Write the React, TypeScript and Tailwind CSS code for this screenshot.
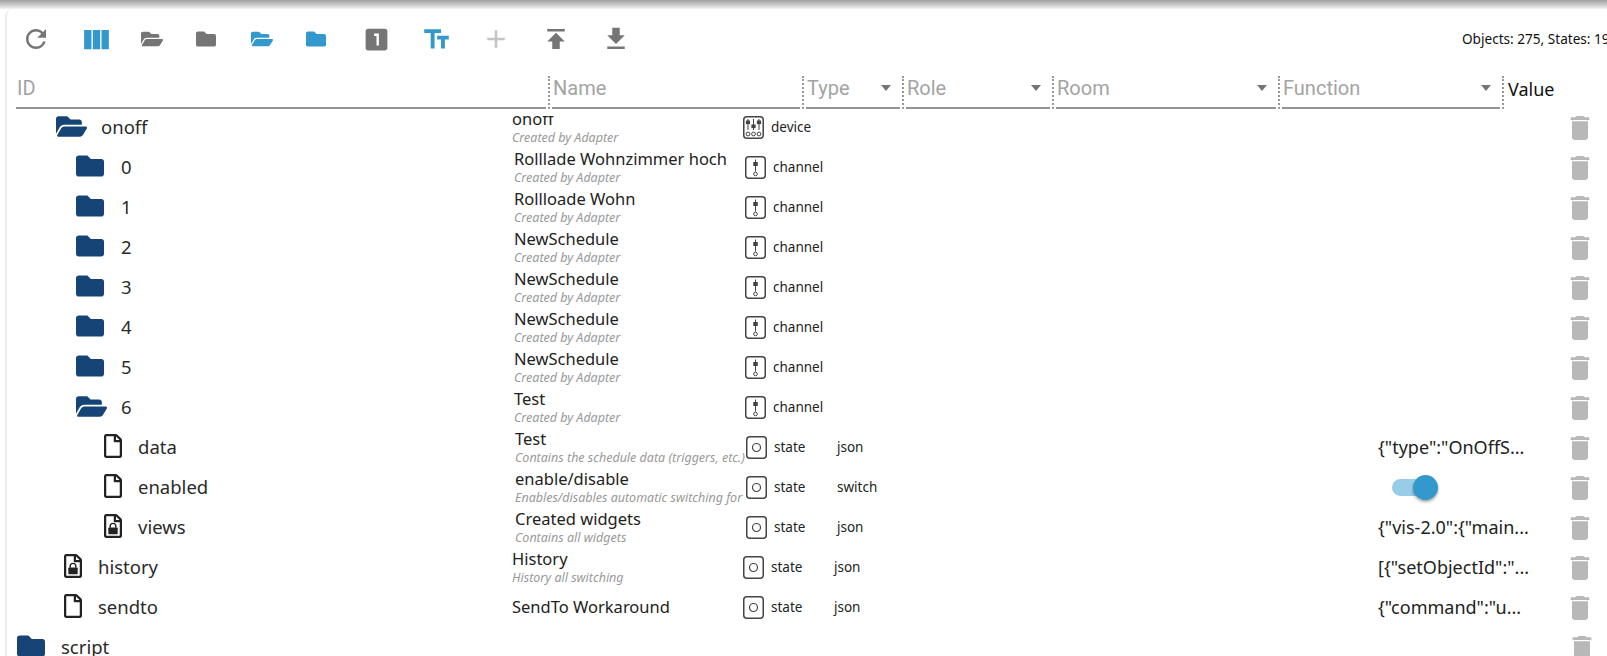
import { FaFolder, FaFolderOpen, FaRegFile } from "react-icons/fa";
import {
  MdAdd,
  MdDelete,
  MdFileDownload,
  MdLooksOne,
  MdPublish,
  MdRefresh,
  MdTextFields,
  MdViewColumn,
} from "react-icons/md";

type Row = {
  id: string;
  icon: "open" | "closed" | "file" | "locked";
  indent: string;
  idWidth: string;
  gap: string;
  name?: string;
  desc?: string;
  type?: "device" | "channel" | "state";
  role?: string;
  value?: string | boolean;
};

const folderRow = { indent: "pl-[77px]", idWidth: "w-[515px]", gap: "ml-[17px]" };
const fileRow = { indent: "pl-[105px]", idWidth: "w-[516px]", gap: "ml-[16px]" };
const topFile = { indent: "pl-[65px]", idWidth: "w-[513px]", gap: "ml-[16px]" };
const by = "Created by Adapter";

const rows: Row[] = [
  { id: "onoff", icon: "open", indent: "pl-[57px]", idWidth: "w-[513px]", gap: "ml-[14px]", name: "onoff", desc: by, type: "device" },
  { id: "0", icon: "closed", ...folderRow, name: "Rolllade Wohnzimmer hoch", desc: by, type: "channel" },
  { id: "1", icon: "closed", ...folderRow, name: "Rollloade Wohn", desc: by, type: "channel" },
  { id: "2", icon: "closed", ...folderRow, name: "NewSchedule", desc: by, type: "channel" },
  { id: "3", icon: "closed", ...folderRow, name: "NewSchedule", desc: by, type: "channel" },
  { id: "4", icon: "closed", ...folderRow, name: "NewSchedule", desc: by, type: "channel" },
  { id: "5", icon: "closed", ...folderRow, name: "NewSchedule", desc: by, type: "channel" },
  { id: "6", icon: "open", ...folderRow, gap: "ml-[14px]", name: "Test", desc: by, type: "channel" },
  { id: "data", icon: "file", ...fileRow, name: "Test", desc: "Contains the schedule data (triggers, etc.)", type: "state", role: "json", value: '{"type":"OnOffS...' },
  { id: "enabled", icon: "file", ...fileRow, name: "enable/disable", desc: "Enables/disables automatic switching for", type: "state", role: "switch", value: true },
  { id: "views", icon: "locked", ...fileRow, name: "Created widgets", desc: "Contains all widgets", type: "state", role: "json", value: '{"vis-2.0":{"main...' },
  { id: "history", icon: "locked", ...topFile, name: "History", desc: "History all switching", type: "state", role: "json", value: '[{"setObjectId":"...' },
  { id: "sendto", icon: "file", ...topFile, name: "SendTo Workaround", type: "state", role: "json", value: '{"command":"u...' },
  { id: "script", icon: "closed", indent: "pl-[18px]", idWidth: "w-[515px]", gap: "ml-[16px]" },
];

function LockedFile() {
  return (
    <svg viewBox="0 0 384 512" className="h-[24px] w-[18px] shrink-0" fill="#222">
      <path d="M369.9 97.9L286 14C277 5 264.8-.1 252.1-.1H48C21.5 0 0 21.5 0 48v416c0 26.5 21.5 48 48 48h288c26.5 0 48-21.5 48-48V131.9c0-12.7-5.1-25-14.1-34zM332.1 128H256V51.9l76.1 76.1zM48 464V48h160v104c0 13.3 10.7 24 24 24h104v288H48z" />
      <rect x="92" y="290" width="200" height="140" rx="16" />
      <path d="M132 295v-35a60 60 0 0 1 120 0v35" fill="none" stroke="#222" strokeWidth="30" />
    </svg>
  );
}

function IdIcon({ icon }: { icon: Row["icon"] }) {
  if (icon === "open") {
    return <FaFolderOpen className="shrink-0 text-[#164477]" size={31} />;
  }
  if (icon === "closed") {
    return <FaFolder className="shrink-0 text-[#164477]" size={28} />;
  }
  if (icon === "file") {
    return <FaRegFile className="h-[24px] w-[18px] shrink-0 text-[#222]" />;
  }
  return <LockedFile />;
}

function TypeIcon({ type }: { type: NonNullable<Row["type"]> }) {
  return (
    <svg viewBox="0 0 21 23" className="h-[23px] w-[21px] shrink-0" fill="none" stroke="#444" strokeWidth="1">
      <rect x="0.75" y="0.75" width="19.5" height="21.5" rx="3" strokeWidth="1.5" />
      {type === "state" && <circle cx="10.5" cy="11.5" r="4" strokeWidth="1.2" />}
      {type === "channel" && (
        <>
          <path d="M10.5 3.5v12" />
          <rect x="8.8" y="6.5" width="3.4" height="3" fill="#444" />
          <circle cx="10.5" cy="18" r="1.8" />
        </>
      )}
      {type === "device" && (
        <>
          <path d="M5 3v11M10.5 3v11M16 3v11" />
          <rect x="3.4" y="5" width="3.2" height="2.6" fill="#444" />
          <rect x="8.9" y="9" width="3.2" height="2.6" fill="#444" />
          <rect x="14.4" y="5" width="3.2" height="2.6" fill="#444" />
          <circle cx="5" cy="18" r="1.9" />
          <circle cx="10.5" cy="18" r="1.9" />
          <circle cx="16" cy="18" r="1.9" />
        </>
      )}
    </svg>
  );
}

function HeaderCell({ label, width, arrow }: { label: string; width: string; arrow?: boolean }) {
  return (
    <div className={`flex h-[46px] shrink-0 items-end ${width}`}>
      <div className="flex h-[38px] flex-1 items-center justify-between border-b-2 border-[#949494] pb-[2px] pl-[1px] pr-[7px] text-[20px] leading-none text-[#a3a3a3]">
        <span>{label}</span>
        {arrow && <span className="mr-[2px] h-0 w-0 border-x-[5.5px] border-t-[6px] border-x-transparent border-t-[#757575]" />}
      </div>
      <div className="mx-[2px] h-[33px] w-0 border-l-2 border-dotted border-[#999]" />
    </div>
  );
}

function RowLine({ row }: { row: Row }) {
  const isFileRow = row.indent === "pl-[105px]";
  return (
    <div className="flex h-[40px] shrink-0 items-center">
      <div className={`flex shrink-0 items-center text-[18.5px] text-[#2a2a2a] ${row.idWidth} ${row.indent}`}>
        <IdIcon icon={row.icon} />
        <span className={`mt-[2px] ${row.gap}`}>{row.id}</span>
      </div>
      <div className={`flex h-[40px] w-[231px] shrink-0 flex-col justify-center overflow-hidden ${row.desc ? "pt-[2px]" : ""}`}>
        {row.name && <div className="text-[16.5px] leading-[21px] whitespace-nowrap text-[#222]">{row.name}</div>}
        {row.desc && (
          <div className="mt-[1px] text-[12.5px] leading-[16px] whitespace-nowrap text-[#999] italic">{row.desc}</div>
        )}
      </div>
      <div className="mt-[2px] flex w-[91px] shrink-0 items-center text-[13.5px] text-[#222]">
        {row.type && <TypeIcon type={row.type} />}
        {row.type && <span className="ml-[7px]">{row.type}</span>}
      </div>
      <div className="mt-[2px] w-[541px] shrink-0 text-[13.5px] text-[#222]">{row.role}</div>
      <div className={`mt-[2px] flex min-w-0 flex-1 items-center text-[18px] whitespace-nowrap text-[#222] ${isFileRow ? "" : "pl-[3px]"}`}>
        {row.value === true ? (
          <div className="relative ml-[14px] h-[17px] w-[40px] rounded-full bg-[#99cce6]">
            <div className="absolute right-[-6px] top-[-4px] h-[25px] w-[25px] rounded-full bg-[#3399cc] shadow-[0_2px_3px_rgba(0,0,0,0.35)]" />
          </div>
        ) : (
          row.value
        )}
      </div>
      <MdDelete size={32} className={`mt-[3px] shrink-0 text-[#b8b8b8] ${row.id === "script" ? "mr-[9px]" : "mr-[11px]"}`} />
    </div>
  );
}

export default function App() {
  return (
    <div className="flex h-[656px] w-[1607px] flex-col overflow-hidden bg-white font-['Noto_Sans',sans-serif]">
      <div className="h-[9px] shrink-0 bg-[linear-gradient(180deg,#a0a0a0_0%,#c8c8c8_50%,#f5f5f5_100%)]" />
      <div className="ml-[5px] flex min-h-0 flex-1 flex-col rounded-tl-lg border-l-2 border-[#ececec]">
        {/* toolbar */}
        <div className="-ml-[1px] flex h-[44px] shrink-0 items-center pt-[16px] text-[#757575]">
          <div className="flex w-[60px] justify-center"><MdRefresh size={30} /></div>
          <div className="flex w-[60px] justify-center"><MdViewColumn size={33} className="text-[#3399cc]" /></div>
          <div className="flex w-[52px] justify-center"><FaFolderOpen size={22} /></div>
          <div className="flex w-[56px] justify-center"><FaFolder size={20} /></div>
          <div className="flex w-[56px] justify-center"><FaFolderOpen size={22} className="text-[#3399cc]" /></div>
          <div className="flex w-[52px] justify-center"><FaFolder size={20} className="text-[#3399cc]" /></div>
          <div className="ml-[4px] flex w-[60px] justify-center"><MdLooksOne size={29} /></div>
          <div className="flex w-[60px] justify-center"><MdTextFields size={31} className="text-[#3399cc]" /></div>
          <div className="flex w-[60px] justify-center"><MdAdd size={30} className="text-[#c4c4c4]" /></div>
          <div className="flex w-[60px] justify-center"><MdPublish size={30} /></div>
          <div className="flex w-[60px] justify-center"><MdFileDownload size={30} /></div>
          <div className="ml-auto w-[145px] shrink-0 text-[13.6px] whitespace-nowrap text-[#111]">Objects: 275, States: 19</div>
        </div>

        {/* filter header */}
        <div className="mt-[10px] flex shrink-0 pl-[9px] font-['Roboto',sans-serif]">
          <HeaderCell label="ID" width="w-[536px]" />
          <HeaderCell label="Name" width="w-[254px]" />
          <HeaderCell label="Type" width="w-[100px]" arrow />
          <HeaderCell label="Role" width="w-[150px]" arrow />
          <HeaderCell label="Room" width="w-[226px]" arrow />
          <HeaderCell label="Function" width="w-[224px]" arrow />
          <div className="pl-[2px] pt-[13px] font-['Noto_Sans',sans-serif] text-[18px] text-[#111]">Value</div>
        </div>

        {/* rows, first one is scrolled partly out of view */}
        <div className="mt-[7px] min-h-0 flex-1 overflow-hidden">
          <div className="-mt-[10px] -ml-[8px] flex flex-col">
            {rows.map((row) => (
              <RowLine key={row.id} row={row} />
            ))}
          </div>
        </div>
      </div>
    </div>
  );
}
